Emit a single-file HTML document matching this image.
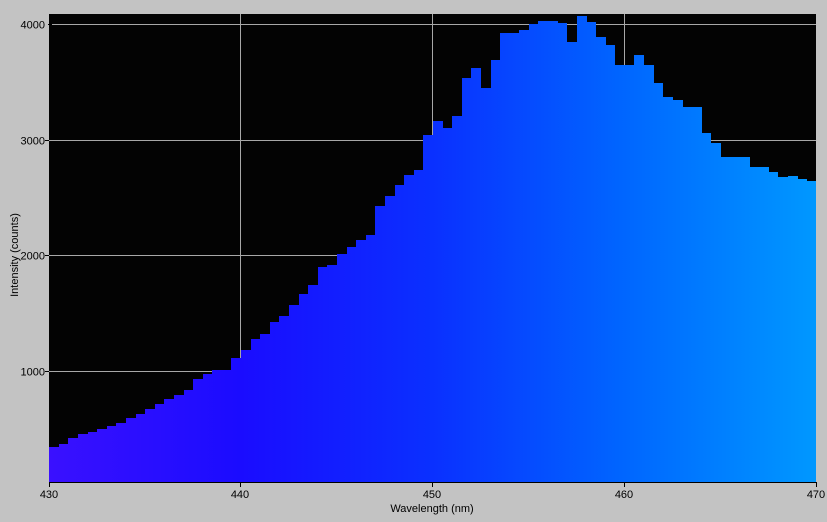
<!DOCTYPE html>
<html><head><meta charset="utf-8"><style>
html,body{margin:0;padding:0;background:#c3c3c3;}
svg{display:block;font-family:"Liberation Sans",sans-serif;}
</style></head><body>
<svg width="827" height="522" viewBox="0 0 827 522" xmlns="http://www.w3.org/2000/svg">
<defs>
<linearGradient id="g" x1="49" y1="0" x2="816" y2="0" gradientUnits="userSpaceOnUse">
<stop offset="0" stop-color="#3a10ff"/>
<stop offset="0.25" stop-color="#1a0cff"/>
<stop offset="0.5" stop-color="#0a30ff"/>
<stop offset="0.75" stop-color="#0066ff"/>
<stop offset="1" stop-color="#0098ff"/>
</linearGradient>
</defs>
<rect x="0" y="0" width="827" height="522" fill="#c3c3c3"/>
<rect x="49" y="14" width="767" height="468" fill="#030303"/>
<g stroke="#a8a8a8" stroke-width="1">
<line x1="49" y1="24.5" x2="816" y2="24.5"/>
<line x1="49" y1="140.5" x2="816" y2="140.5"/>
<line x1="49" y1="255.5" x2="816" y2="255.5"/>
<line x1="49" y1="371.5" x2="816" y2="371.5"/>
<line x1="240.5" y1="14" x2="240.5" y2="482"/>
<line x1="432.5" y1="14" x2="432.5" y2="482"/>
<line x1="624.5" y1="14" x2="624.5" y2="482"/>
</g>
<path fill="url(#g)" d="M49,482 V447 H59 V444 H68 V438 H78 V434 H88 V432 H97 V429 H107 V426 H116 V423 H126 V418 H136 V414 H145 V409 H155 V404 H164 V399 H174 V395 H184 V390 H193 V379 H203 V374 H212 V370 H222 V370 H231 V358 H241 V350 H251 V339 H260 V334 H270 V322 H279 V316 H289 V305 H299 V294 H308 V285 H318 V267 H327 V265 H337 V254 H347 V247 H356 V240 H366 V235 H375 V206 H385 V196 H395 V185 H404 V175 H414 V170 H423 V135 H433 V121 H443 V128 H452 V116 H462 V78 H471 V68 H481 V88 H491 V60 H500 V33 H510 V33 H519 V30 H529 V24 H538 V21 H548 V21 H558 V23 H567 V42 H577 V16 H587 V22 H596 V37 H606 V45 H615 V65 H625 V65 H634 V55 H644 V65 H654 V83 H663 V97 H673 V100 H683 V107 H692 V107 H702 V133 H711 V143 H721 V157 H731 V157 H740 V157 H750 V167 H759 V167 H769 V172 H778 V177 H788 V176 H798 V179 H807 V181 H816 V482 Z"/>
<g stroke="#000" stroke-width="1">
<line x1="49" y1="482.5" x2="817" y2="482.5"/>
<line x1="49.5" y1="482" x2="49.5" y2="487"/>
<line x1="816.5" y1="482" x2="816.5" y2="487"/>
<line x1="240.5" y1="482" x2="240.5" y2="487"/>
<line x1="432.5" y1="482" x2="432.5" y2="487"/>
<line x1="624.5" y1="482" x2="624.5" y2="487"/>
<line x1="48" y1="24.5" x2="52" y2="24.5"/>
<line x1="45" y1="140.5" x2="49" y2="140.5"/>
<line x1="45" y1="255.5" x2="49" y2="255.5"/>
<line x1="45" y1="371.5" x2="49" y2="371.5"/>
</g>
<g font-size="11" fill="#000">
<text x="45" y="28.5" text-anchor="end">4000</text>
<text x="45" y="144.5" text-anchor="end">3000</text>
<text x="45" y="259.5" text-anchor="end">2000</text>
<text x="45" y="375.5" text-anchor="end">1000</text>
<text x="49" y="498" text-anchor="middle">430</text>
<text x="240" y="498" text-anchor="middle">440</text>
<text x="432" y="498" text-anchor="middle">450</text>
<text x="624" y="498" text-anchor="middle">460</text>
<text x="816" y="498" text-anchor="middle">470</text>
<text x="432" y="512" text-anchor="middle">Wavelength (nm)</text>
<text x="0" y="0" text-anchor="middle" transform="translate(18,255) rotate(-90)">Intensity (counts)</text>
</g>
</svg>
</body></html>
